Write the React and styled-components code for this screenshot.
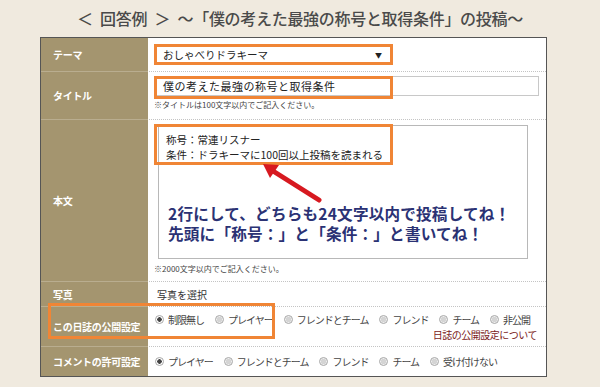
import React from 'react';
import styled, { createGlobalStyle } from 'styled-components';

const GlobalStyle = createGlobalStyle`
    html, body {
        margin: 0;
        padding: 0;
        background: #f0eadf;
        font-family: "Noto Sans CJK JP", "Noto Sans", sans-serif;
    }
`;

const Page = styled.div`
    width: 600px;
    height: 387px;
    display: flex;
    flex-direction: column;
    align-items: center;
`;

const Heading = styled.h1`
    margin: 0;
    height: 37px;
    line-height: 36px;
    font-size: 16px;
    font-weight: 500;
    color: #4a4a4a;
    letter-spacing: -0.3px;
    word-spacing: 4px;
`;

const Table = styled.div`
    position: relative;
    align-self: flex-start;
    margin-left: 40px;
    width: 505px;
    border: 1px solid #555;
    background: #fff;
    display: flex;
    flex-direction: column;
`;

const Row = styled.div`
    display: grid;
    grid-template-columns: 107px 1fr;
    height: ${p => p.$h}px;
    border-top: ${p => (p.$first ? 'none' : '1px dotted #c4c4c4')};
`;

const Label = styled.div`
    background: #a4956f;
    color: #fff;
    font-size: 10px;
    font-weight: 700;
    padding-left: 12px;
    display: flex;
    align-items: center;
    white-space: nowrap;
    letter-spacing: -0.3px;
    border-top: ${p => (p.$first ? 'none' : '1px solid #b9ad8f')};
    margin-top: ${p => (p.$first ? '0' : '-1px')};
`;

const Cell = styled.div`
    padding: ${p => p.$pad || '0 0 0 6px'};
    display: flex;
    flex-direction: column;
    justify-content: ${p => p.$justify || 'center'};
    position: relative;
    font-size: 10px;
    color: #333;
`;

const SelectBox = styled.div`
    width: 219px;
    height: 15px;
    border: 3px solid #f08535;
    display: flex;
    align-items: center;
    justify-content: space-between;
    padding: 0 8px 0 6px;
    box-sizing: content-box;
    font-size: 10.5px;
    color: #222;
`;

const Caret = styled.span`
    font-size: 7px;
    color: #222;
`;

const InputWrap = styled.div`
    position: relative;
    width: 385px;
    height: 20px;
    border: 1px solid #c8c8c8;
    display: flex;
    align-items: center;
    padding-left: 8px;
    box-sizing: border-box;
    font-size: 11px;
    color: #222;
    letter-spacing: 0.5px;
`;

const Highlight = styled.div`
    position: absolute;
    border: 3px solid #f08535;
    pointer-events: none;
    left: ${p => p.$l}px;
    top: ${p => p.$t}px;
    width: ${p => p.$w}px;
    height: ${p => p.$h}px;
    box-sizing: border-box;
`;

const Note = styled.div`
    font-size: 8px;
    color: #444;
    margin-top: ${p => p.$mt || 3}px;
`;

const TextArea = styled.div`
    position: relative;
    width: 370px;
    height: 134px;
    border: 1px solid #b8b8b8;
    box-sizing: border-box;
    margin-left: 4px;
    margin-top: 5px;
    display: flex;
    flex-direction: column;
`;

const BodyLines = styled.div`
    padding: 6px 0 0 7px;
    font-size: 10.5px;
    line-height: 15px;
    color: #222;
`;

const Instruction = styled.p`
    margin: 41px 0 0 9px;
    font-size: 15.6px;
    font-weight: 700;
    line-height: 20px;
    color: #2b3274;
    letter-spacing: 0.2px;
`;

const Arrow = styled.svg`
    position: absolute;
    left: 100px;
    top: 36px;
`;

const Radios = styled.div`
    display: flex;
    align-items: center;
    gap: ${p => p.$gap || 11}px;
    padding-left: 1px;
`;

const RadioItem = styled.label`
    display: flex;
    align-items: center;
    gap: 4px;
    flex-shrink: 0;
    white-space: nowrap;
    font-size: 10px;
    color: #444;
    letter-spacing: -1px;
`;

const Dot = styled.span`
    width: 9px;
    height: 9px;
    flex-shrink: 0;
    border-radius: 50%;
    box-sizing: border-box;
    border: 1px solid #a8a8a8;
    background: ${p => (p.$on ? 'radial-gradient(circle, #444 0 2px, #fff 2.5px)' : 'radial-gradient(circle, #d4d4d4 0 2.5px, #eee 3px)')};
`;

const Link = styled.a`
    align-self: flex-end;
    margin-right: 9px;
    margin-top: 0;
    font-size: 10px;
    white-space: nowrap;
    letter-spacing: -0.5px;
    color: #7a1b1b;
    text-decoration: none;
`;

const Radio = ({ label, on }) => (
    <RadioItem>
        <Dot $on={on} />
        {label}
    </RadioItem>
);

const App = () => {
    return (
        <Page>
            <GlobalStyle />
            <Heading>＜ 回答例 ＞ ～「僕の考えた最強の称号と取得条件」の投稿～</Heading>
            <Table>
                <Row $h={33} $first>
                    <Label $first>テーマ</Label>
                    <Cell>
                        <SelectBox>
                            おしゃべりドラキーマ
                            <Caret>▼</Caret>
                        </SelectBox>
                    </Cell>
                </Row>
                <Row $h={47}>
                    <Label>タイトル</Label>
                    <Cell $justify="flex-start" $pad="4px 0 0 6px">
                        <InputWrap>
                            僕の考えた最強の称号と取得条件
                            <Highlight $l={-1} $t={-1} $w={239} $h={23} />
                        </InputWrap>
                        <Note>※タイトルは100文字以内でご記入ください。</Note>
                    </Cell>
                </Row>
                <Row $h={161}>
                    <Label>本文</Label>
                    <Cell $justify="flex-start" $pad="0 0 0 6px">
                        <TextArea>
                            <BodyLines>
                                <div>称号：常連リスナー</div>
                                <div>条件：ドラキーマに100回以上投稿を読まれる</div>
                            </BodyLines>
                            <Highlight $l={-5} $t={-2} $w={239} $h={41} />
                            <Arrow width="70" height="46" viewBox="0 0 70 46">
                                <line x1="60" y1="38" x2="14" y2="9" stroke="#d71920" strokeWidth="5" strokeLinecap="round" />
                                <polygon points="4,2 20,3 11,16" fill="#d71920" />
                            </Arrow>
                            <Instruction>
                                2行にして、どちらも24文字以内で投稿してね！
                                <br />
                                先頭に「称号：」と「条件：」と書いてね！
                            </Instruction>
                        </TextArea>
                        <Note $mt={4}>※2000文字以内でご記入ください。</Note>
                    </Cell>
                </Row>
                <Row $h={24}>
                    <Label>写真</Label>
                    <Cell $pad="0 0 0 9px">写真を選択</Cell>
                </Row>
                <Row $h={39}>
                    <Label>この日誌の公開設定</Label>
                    <Cell $pad="5px 0 0 6px" $justify="flex-start">
                        <Radios $gap={11}>
                            <Radio label="制限無し" on />
                            <Radio label="プレイヤー" />
                            <Radio label="フレンドとチーム" />
                            <Radio label="フレンド" />
                            <Radio label="チーム" />
                            <Radio label="非公開" />
                        </Radios>
                        <Link>日誌の公開設定について</Link>
                    </Cell>
                </Row>
                <Row $h={29}>
                    <Label>コメントの許可設定</Label>
                    <Cell>
                        <Radios $gap={11}>
                            <Radio label="プレイヤー" on />
                            <Radio label="フレンドとチーム" />
                            <Radio label="フレンド" />
                            <Radio label="チーム" />
                            <Radio label="受け付けない" />
                        </Radios>
                    </Cell>
                </Row>
                <Highlight $l={7} $t={265} $w={227} $h={36} />
            </Table>
        </Page>
    );
};

export default App;
